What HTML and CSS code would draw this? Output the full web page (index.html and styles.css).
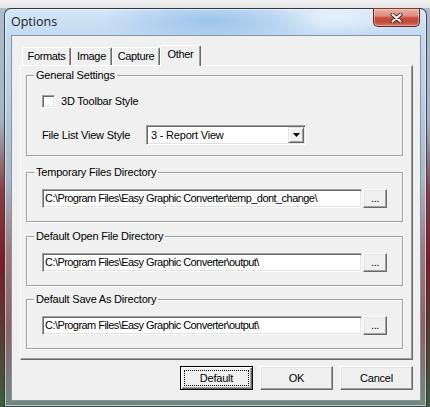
FILE: index.html
```html
<!DOCTYPE html>
<html lang="en">
<head>
<meta charset="utf-8">
<title>Options</title>
<link rel="stylesheet" href="styles.css">
</head>
<body>
<div class="desk">
  <div class="window">
    <div class="titlebar">
      <span class="title">Options</span>
      <button class="close" aria-label="Close">
        <svg width="13" height="10" viewBox="0 0 13 10"><path d="M2.5 1.5 L10.5 8.5 M10.5 1.5 L2.5 8.5" stroke="#4a1e18" stroke-width="4" stroke-linecap="round" fill="none"/><path d="M2.5 1.5 L10.5 8.5 M10.5 1.5 L2.5 8.5" stroke="#ffffff" stroke-width="2.2" stroke-linecap="round" fill="none"/></svg>
      </button>
    </div>
    <div class="client">
      <div class="tabs">
        <div class="tab t-formats">Formats</div>
        <div class="tab t-image">Image</div>
        <div class="tab t-capture">Capture</div>
        <div class="tab t-other active">Other</div>
      </div>
      <div class="panel">
        <fieldset class="group g-general">
          <legend>General Settings</legend>
          <label class="check-row"><span class="checkbox"></span><span class="check-label">3D Toolbar Style</span></label>
          <div class="combo-row">
            <span class="combo-label">File List View Style</span>
            <div class="combo">
              <span class="combo-text">3 - Report View</span>
              <span class="combo-btn"><svg width="7" height="4" viewBox="0 0 7 4"><path d="M0 0 H7 L3.5 4 Z" fill="#000"/></svg></span>
            </div>
          </div>
        </fieldset>
        <fieldset class="group g-dir g-temp">
          <legend>Temporary Files Directory</legend>
          <div class="path-row">
            <div class="path">C:\Program Files\Easy Graphic Converter\temp_dont_change\</div>
            <button class="browse">...</button>
          </div>
        </fieldset>
        <fieldset class="group g-dir g-open">
          <legend>Default Open File Directory</legend>
          <div class="path-row">
            <div class="path">C:\Program Files\Easy Graphic Converter\output\</div>
            <button class="browse">...</button>
          </div>
        </fieldset>
        <fieldset class="group g-dir g-save">
          <legend>Default Save As Directory</legend>
          <div class="path-row">
            <div class="path">C:\Program Files\Easy Graphic Converter\output\</div>
            <button class="browse">...</button>
          </div>
        </fieldset>
      </div>
      <div class="actions">
        <button class="btn btn-default"><span class="focus">Default</span></button>
        <button class="btn"><span class="plain">OK</span></button>
        <button class="btn"><span class="plain">Cancel</span></button>
      </div>
    </div>
  </div>
</div>
</body>
</html>
```
FILE: styles.css
```css
html, body {
  margin: 0;
  padding: 0;
}

body {
  width: 430px;
  height: 407px;
  overflow: hidden;
  font-family: "Liberation Sans", Arial, sans-serif;
  font-size: 11px;
  letter-spacing: -0.2px;
  color: #000;
  background:
    linear-gradient(to bottom, #f3f3f3 0, #e4e4e4 8px, transparent 8px),
    linear-gradient(to bottom, #aebccb 0, #a7b4c0 120px, #8e3c44 190px, #7d1c24 260px, #5b3b2c 330px, #3f5d3f 407px);
}

.desk {
  box-sizing: border-box;
  height: 407px;
  padding: 8px 4px 0 4px;
}

.window {
  box-sizing: border-box;
  width: 423px;
  height: 399px;
  border: 1px solid rgba(32, 44, 58, 0.85);
  border-radius: 7px 7px 0 0;
  padding: 0 5px 5px 6px;
  display: flex;
  flex-direction: column;
  background:
    radial-gradient(ellipse 110px 26px at 205px 12px, rgba(140, 186, 232, 0.75), rgba(140, 186, 232, 0)),
    radial-gradient(ellipse 70px 20px at 330px 8px, rgba(235, 244, 252, 0.8), rgba(235, 244, 252, 0)),
    linear-gradient(to bottom, #d4e6f8 0, #c3daf1 26px, #b6cde4 90px, #a9b8c6 170px, #a07a80 240px, #8f6064 320px, #6f8a78 399px);
  box-shadow: inset 0 0 0 1px rgba(255, 255, 255, 0.55);
}

.titlebar {
  height: 26px;
  display: flex;
  justify-content: space-between;
  align-items: flex-start;
}

.title {
  font-family: "Open Sans", "Noto Sans", sans-serif;
  font-size: 12.5px;
  letter-spacing: 0;
  line-height: 26px;
  color: #1a1a1a;
}

.close {
  box-sizing: border-box;
  width: 47px;
  height: 19px;
  margin: -1px 1px 0 0;
  padding: 0;
  border: 1px solid #5e2a24;
  border-top-color: #7a3a30;
  border-radius: 0 0 5px 5px;
  display: flex;
  align-items: center;
  justify-content: center;
  background: linear-gradient(to bottom, #eab3a5 0, #dc8e7c 40%, #c8503b 52%, #c24a34 75%, #d8775f 100%);
  box-shadow: inset 0 0 0 1px rgba(255, 220, 210, 0.45);
}

.client {
  flex: 1;
  box-sizing: border-box;
  border: 1px solid #8594a4;
  background: #f0f0f0;
  padding: 9px 7px 10px 8px;
  display: flex;
  flex-direction: column;
}

.tabs {
  height: 20px;
  flex: none;
  display: flex;
  align-items: flex-end;
  padding-left: 2px;
}

.tab {
  box-sizing: border-box;
  height: 18px;
  padding-top: 1px;
  line-height: 15px;
  text-align: center;
  letter-spacing: -0.35px;
  border-left: 1px solid #fff;
  border-top: 1px solid #fff;
  border-right: 1px solid #696969;
  border-radius: 2px 2px 0 0;
  box-shadow: inset -1px 0 0 #a0a0a0;
  background: #f0f0f0;
}

.t-formats { width: 49px; }
.t-image { width: 41px; }
.t-capture { width: 48px; }
.t-other { width: 41px; }

.tab.active {
  height: 21px;
  padding-top: 1px;
  margin-bottom: -1px;
  position: relative;
  z-index: 1;
}

.panel {
  flex: 1;
  box-sizing: border-box;
  border-top: 1px solid #fff;
  border-left: 1px solid #fff;
  border-right: 1px solid #696969;
  border-bottom: 1px solid #696969;
  box-shadow: inset -1px -1px 0 #a0a0a0;
  padding: 3px 9px 0 5px;
  display: flex;
  flex-direction: column;
}

.group {
  margin: 0;
  min-width: 0;
  border: 1px solid #a0a0a0;
  box-shadow: inset 1px 1px 0 #fff, 1px 1px 0 #fff;
}

.group legend {
  padding: 0 2px;
  margin-left: -8px;
  line-height: 13px;
  background: #f0f0f0;
}

.g-general {
  padding: 13px 8px 10px 15px;
  margin-bottom: 10px;
}

.g-dir {
  padding: 10px 8px 13px 15px;
}

.g-open {
  margin-top: 8px;
}

.g-save {
  margin-top: 7px;
}

.check-row {
  height: 13px;
  display: flex;
  align-items: center;
}

.checkbox {
  box-sizing: border-box;
  width: 13px;
  height: 13px;
  border: 1px solid;
  border-color: #a0a0a0 #fff #fff #a0a0a0;
  box-shadow: inset 1px 1px 0 #696969, inset -1px -1px 0 #e3e3e3;
  background: #fff;
}

.check-label {
  margin-left: 6px;
  line-height: 13px;
}

.combo-row {
  margin-top: 17px;
  height: 20px;
  display: flex;
  align-items: center;
}

.combo-label {
  width: 104px;
}

.combo {
  box-sizing: border-box;
  width: 160px;
  height: 20px;
  border: 1px solid;
  border-color: #a0a0a0 #fff #fff #a0a0a0;
  box-shadow: inset 1px 1px 0 #696969, inset -1px -1px 0 #e3e3e3;
  padding: 1px;
  background: #fff;
  display: flex;
}

.combo-text {
  flex: 1;
  padding-left: 3px;
  line-height: 16px;
}

.combo-btn {
  box-sizing: border-box;
  width: 16px;
  height: 16px;
  border: 1px solid;
  border-color: #e3e3e3 #696969 #696969 #e3e3e3;
  box-shadow: inset 1px 1px 0 #fff, inset -1px -1px 0 #a0a0a0;
  background: #f0f0f0;
  display: flex;
  align-items: center;
  justify-content: center;
}

.path-row {
  display: flex;
  height: 19px;
}

.path {
  box-sizing: border-box;
  width: 320px;
  height: 19px;
  border: 1px solid;
  border-color: #a0a0a0 #fff #fff #a0a0a0;
  box-shadow: inset 1px 1px 0 #696969, inset -1px -1px 0 #e3e3e3;
  padding: 1px 0 0 2px;
  line-height: 15px;
  letter-spacing: -0.55px;
  background: #fff;
  white-space: nowrap;
  overflow: hidden;
}

.browse {
  box-sizing: border-box;
  width: 24px;
  height: 19px;
  margin-left: 1px;
  padding: 0;
  font: inherit;
  letter-spacing: -0.35px;
  line-height: 15px;
  color: #000;
  border: 1px solid;
  border-color: #fff #696969 #696969 #fff;
  box-shadow: inset -1px -1px 0 #a0a0a0, inset 1px 1px 0 #e3e3e3;
  background: #f0f0f0;
}

.actions {
  flex: none;
  height: 24px;
  margin-top: 6px;
  display: flex;
  justify-content: flex-end;
  gap: 7px;
}

.btn {
  box-sizing: border-box;
  width: 73px;
  height: 24px;
  padding: 3px;
  font: inherit;
  letter-spacing: inherit;
  color: #000;
  border: 1px solid;
  border-color: #fff #696969 #696969 #fff;
  box-shadow: inset -1px -1px 0 #a0a0a0, inset 1px 1px 0 #e3e3e3;
  background: #f0f0f0;
  display: flex;
}

.btn-default {
  border: 1px solid #000;
  box-shadow: inset 1px 1px 0 #fff, inset -1px -1px 0 #696969, inset -2px -2px 0 #a0a0a0;
}

.focus, .plain {
  flex: 1;
  box-sizing: border-box;
  border: 1px dotted transparent;
  display: flex;
  align-items: center;
  justify-content: center;
  line-height: 14px;
}

.focus {
  border-color: #000;
}
```
